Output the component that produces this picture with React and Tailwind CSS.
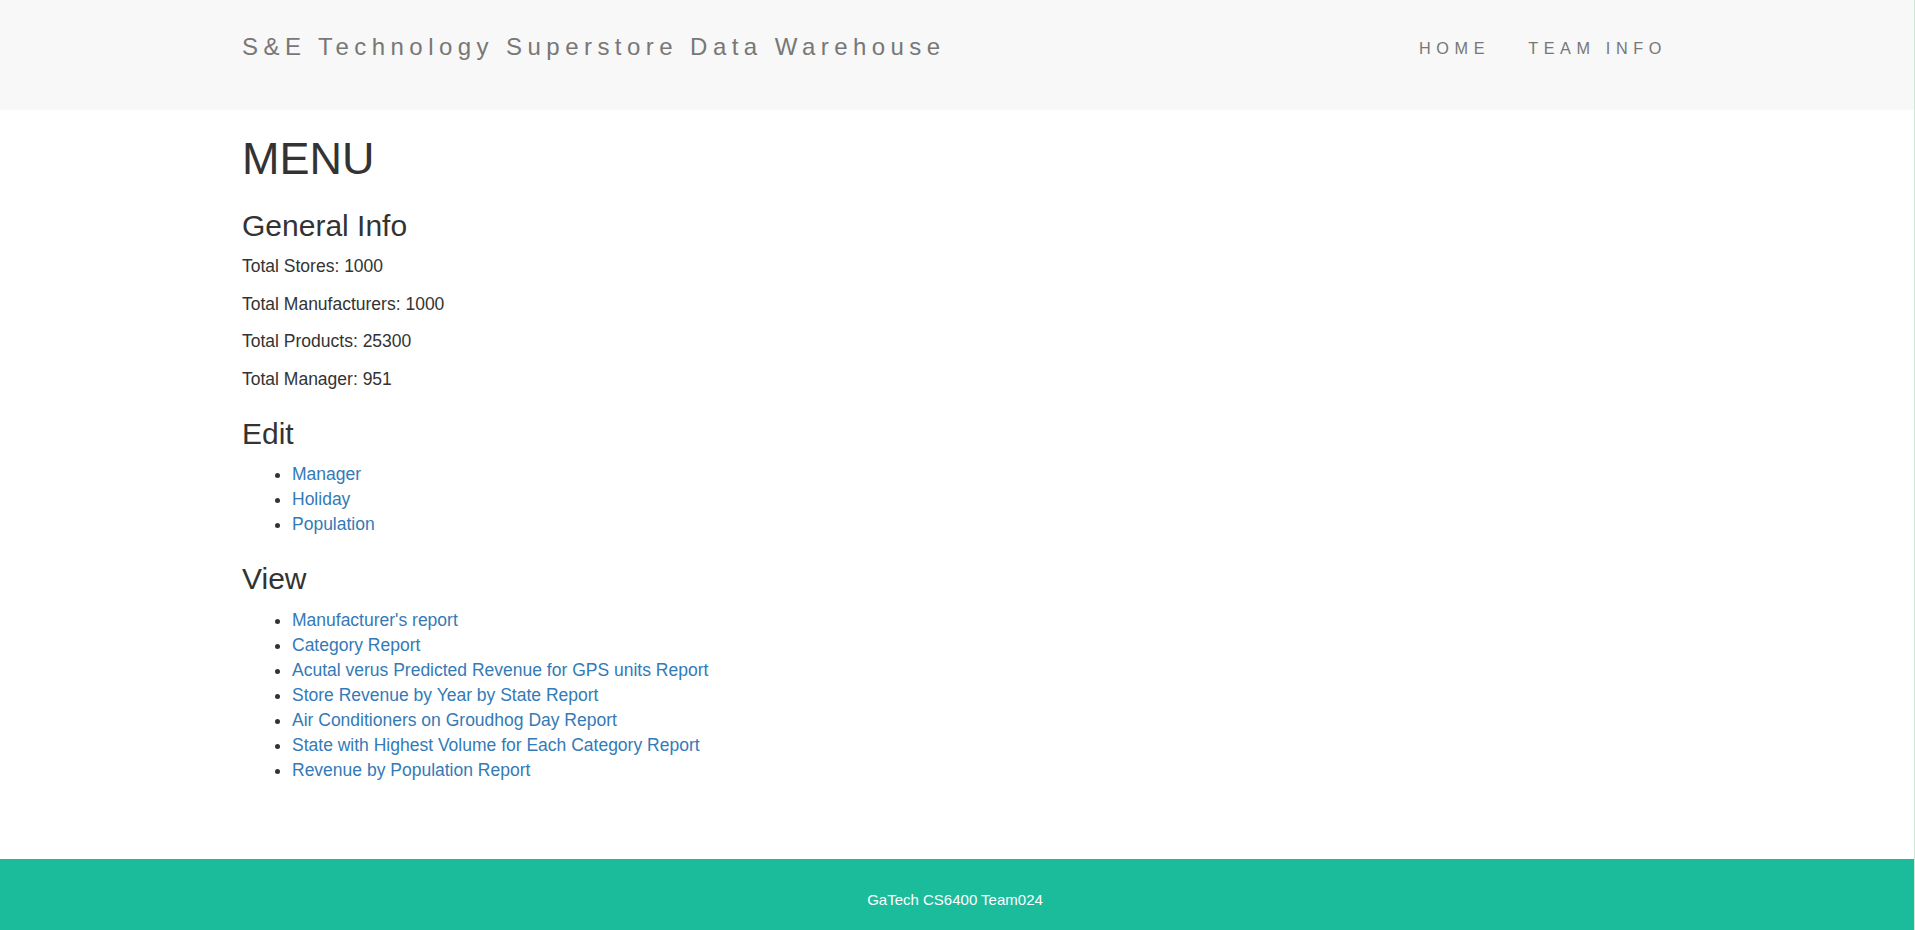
import React from 'react';

const stats = [
  { label: 'Total Stores', value: 1000 },
  { label: 'Total Manufacturers', value: 1000 },
  { label: 'Total Products', value: 25300 },
  { label: 'Total Manager', value: 951 },
];

const editLinks = ['Manager', 'Holiday', 'Population'];

const viewLinks = [
  "Manufacturer's report",
  'Category Report',
  'Acutal verus Predicted Revenue for GPS units Report',
  'Store Revenue by Year by State Report',
  'Air Conditioners on Groudhog Day Report',
  'State with Highest Volume for Each Category Report',
  'Revenue by Population Report',
];

function LinkList({ items }) {
  return (
    <ul className="list-disc pl-[50px] mb-[12.5px]">
      {items.map((item) => (
        <li key={item}>
          <a href="#" className="text-[#337ab7]">{item}</a>
        </li>
      ))}
    </ul>
  );
}

function SectionTitle({ children }) {
  return (
    <h3 className="mt-[25px] mb-[12.5px] text-[30px] leading-[33px] font-normal">{children}</h3>
  );
}

export default function App() {
  return (
    <div className="min-h-screen flex flex-col border-r border-[#cfe8d5] bg-white font-['Liberation_Sans',Arial,sans-serif] text-[#333] text-[17.5px] leading-[25px]">
      {/* Navbar */}
      <header className="h-[110px] bg-[#f8f8f8]">
        <div className="mx-auto w-[1458px] pl-[14px] pt-[35px] flex justify-between items-start">
          <a href="#" className="text-[24px] leading-[24px] tracking-[5.45px] text-[#777]">
            S&amp;E Technology Superstore Data Warehouse
          </a>
          <nav className="flex mt-[5px]">
            <a href="#" className="px-[19px] text-[16.25px] leading-[16px] tracking-[5.6px] text-[#777] uppercase">Home</a>
            <a href="#" className="px-[19px] text-[16.25px] leading-[16px] tracking-[5.6px] text-[#777] uppercase">Team Info</a>
          </nav>
        </div>
      </header>

      {/* Main content */}
      <main className="flex-1">
        <div className="mx-auto w-[1458px] pl-[14px]">
          <h1 className="mt-[24px] mb-[12.5px] text-[45px] leading-[49.5px] font-normal">MENU</h1>

          <SectionTitle>General Info</SectionTitle>
          {stats.map((s) => (
            <p key={s.label} className="mb-[12.5px]">
              {s.label}: {s.value}
            </p>
          ))}

          <SectionTitle>Edit</SectionTitle>
          <LinkList items={editLinks} />

          <SectionTitle>View</SectionTitle>
          <LinkList items={viewLinks} />
        </div>
      </main>

      {/* Footer */}
      <footer className="h-[71px] bg-[#1abc9c] pt-[31px] pr-[4px] text-center text-white text-[15px] leading-[20px]">
        GaTech CS6400 Team024
      </footer>
    </div>
  );
}
